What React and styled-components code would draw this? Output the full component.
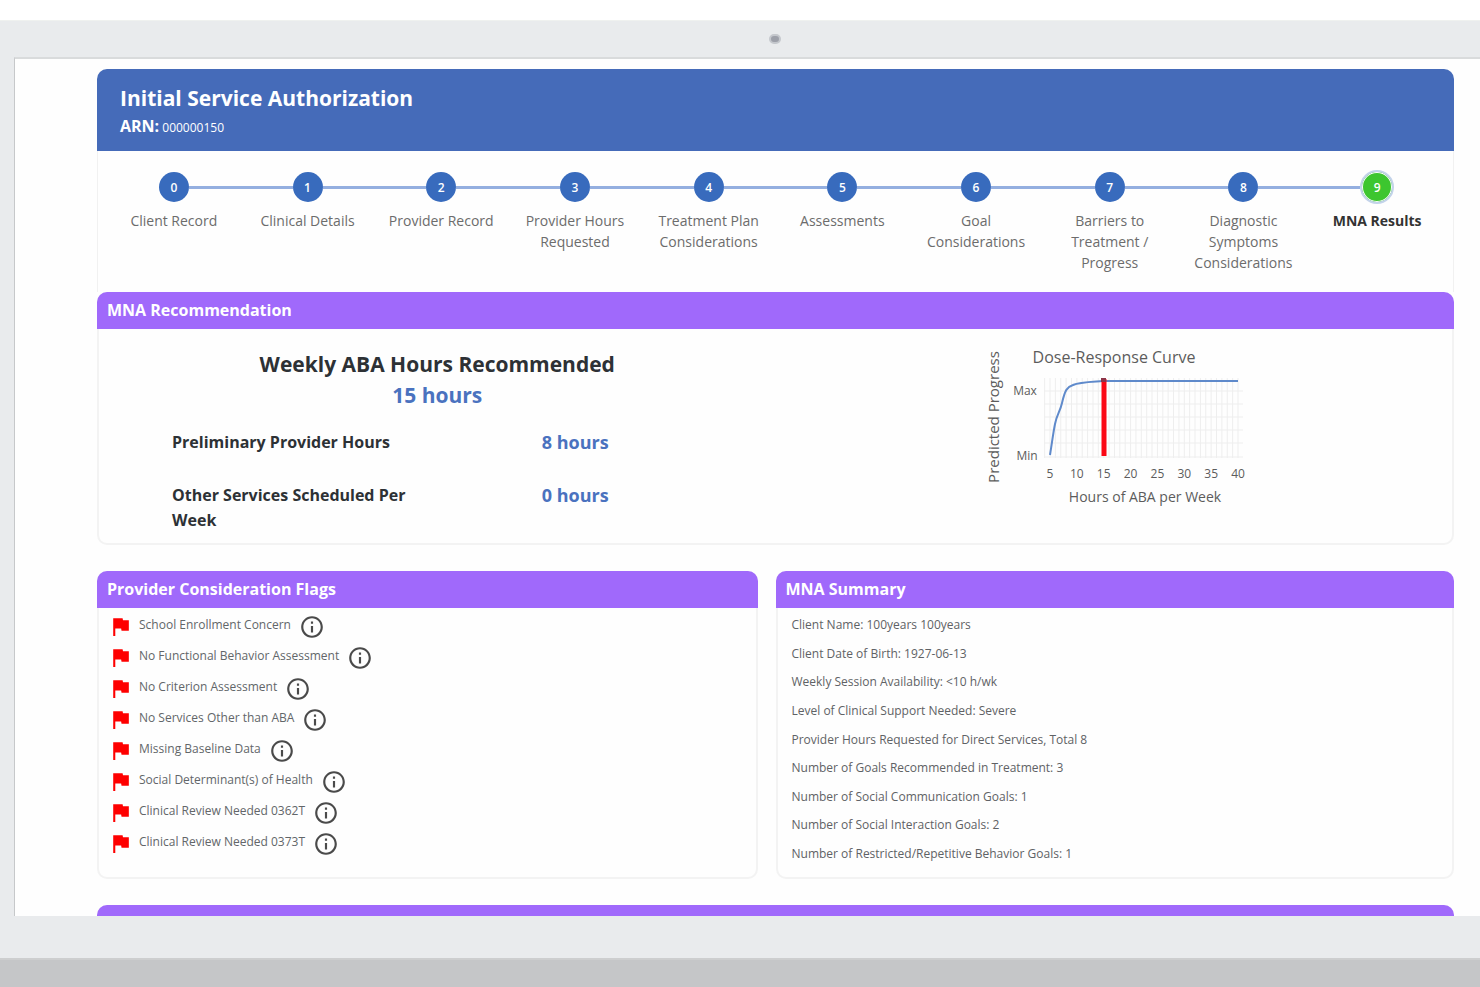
import { useState } from 'react';
import styled, { createGlobalStyle } from 'styled-components';
import { MdFlag, MdInfoOutline } from 'react-icons/md';

const GlobalStyle = createGlobalStyle`
    * {
        box-sizing: border-box;
    }
    body {
        margin: 0;
        background: #fff;
        color: #2d3135;
        font-family: 'Open Sans', 'Noto Sans', sans-serif;
    }
    h1, h2, h3, p, ul, ol {
        margin: 0;
        padding: 0;
    }
    ul, ol {
        list-style: none;
    }
    button {
        padding: 0;
        border: 0;
        background: none;
        color: inherit;
        font-family: inherit;
        cursor: pointer;
    }
`;

const Monitor = styled.div`
    display: flex;
    flex-direction: column;
    height: 100vh;
    padding-top: 20px;
`;

const Bezel = styled.div`
    flex: 1;
    min-height: 0;
    display: flex;
    flex-direction: column;
    padding: 0 0 42px 14px;
    background: #e9ebed;
    border-top: 1px solid #eff1ef;
`;

const CameraBar = styled.div`
    display: flex;
    flex: none;
    align-items: center;
    justify-content: center;
    height: 36px;
    padding-left: 56px;
`;

const Camera = styled.span`
    width: 12px;
    height: 10px;
    border: 2px solid #c5c8cd;
    border-radius: 5px;
    background: #9da0a9;
`;

const Base = styled.div`
    flex: none;
    height: 29px;
    background: #c5c6c8;
    border-top: 2px solid #cdcecf;
`;

const Screen = styled.main`
    flex: 1;
    min-height: 0;
    overflow: hidden;
    padding: 10px 26px 0 82px;
    border-top: 2px solid #d9dbdc;
    border-left: 1px solid #c6c8ca;
    background: #fefefe;
`;

const Header = styled.header`
    padding: 15px 23px 9px;
    border-radius: 10px 10px 0 0;
    background: #456bb9;
    color: #fff;
`;

const Title = styled.h1`
    font-size: 21px;
    line-height: 28px;
`;

const Arn = styled.p`
    font-size: 12px;
    line-height: 28px;

    strong {
        font-size: 16px;
    }
`;

const Steps = styled.ol`
    display: grid;
    grid-template-columns: repeat(10, 1fr);
    min-height: 141px;
    padding: 19px 9px 17px;
    border: solid #f1f1f1;
    border-width: 0 1px;
`;

const StepButton = styled.button`
    display: block;
    width: 100%;
    color: ${(p) => (p.$active ? '#333' : '#6c6c6c')};
    font-size: 14px;
    font-weight: ${(p) => (p.$active ? 700 : 400)};
    line-height: 21px;
`;

const Marker = styled.span`
    display: flex;
    align-items: center;
    height: 34px;
    margin-bottom: 6px;
`;

const Line = styled.span`
    flex: 1;
    height: 3px;
    background: ${(p) => (p.$hidden ? 'transparent' : '#94afe0')};
`;

const Circle = styled.span`
    display: flex;
    align-items: center;
    justify-content: center;
    width: ${(p) => (p.$active ? 34 : 30)}px;
    height: ${(p) => (p.$active ? 34 : 30)}px;
    border: ${(p) => (p.$active ? '2px solid #c3d3ea' : '0')};
    border-radius: 50%;
    background: ${(p) => (p.$active ? '#3dc62f' : '#386bbd')};
    box-shadow: ${(p) => (p.$active ? 'inset 0 0 0 1px #fff' : 'none')};
    color: #fff;
    font-size: 12px;
    font-weight: 600;
`;

const StepLabel = styled.span`
    display: block;
    padding: 0 10px;
`;

const Card = styled.section`
    display: flex;
    flex-direction: column;
    margin-bottom: 26px;
    border: 2px solid #f3f3f3;
    border-top: 0;
    border-radius: 10px;
`;

const CardTitle = styled.h2`
    margin: 0 -2px;
    padding: 6px 10px 7px;
    border-radius: 10px 10px 0 0;
    background: #a069fb;
    color: #fff;
    font-size: 16px;
    line-height: 24px;
`;

const Recommendation = styled.div`
    display: grid;
    grid-template-columns: 1fr 1fr;
    padding: 18px 0 10px;
`;

const Hours = styled.span`
    color: #4a72bf;
    font-size: ${(p) => (p.$large ? 21 : 18)}px;
    font-weight: 700;
    text-align: center;
`;

const Weekly = styled.div`
    display: flex;
    flex-direction: column;
    padding-top: 2px;
    margin-bottom: 19px;
    line-height: 31px;
    text-align: center;

    h3 {
        font-size: 21px;
    }
`;

const HoursRow = styled.div`
    display: grid;
    grid-template-columns: 13fr 12fr;
    padding: 0 73px;
    margin-bottom: ${(p) => (p.$last ? 0 : 28)}px;
    font-size: 16px;
    font-weight: 700;
    line-height: 25px;
`;

const ChartBox = styled.div`
    display: flex;
    justify-content: center;
    align-items: flex-start;
`;

const ChartText = styled.text`
    fill: #5c5c5c;
    font-family: 'Open Sans', 'Noto Sans', sans-serif;
    font-size: ${(p) => p.$size}px;
    text-anchor: middle;
`;

const Columns = styled.div`
    display: grid;
    grid-template-columns: 661fr 679fr;
    column-gap: 18px;
`;

const Flags = styled.ul`
    padding: 3px 9px 18px;
`;

const Flag = styled.li`
    display: flex;
    align-items: center;
    height: 31px;
    color: #626669;
    font-size: 12px;

    > svg {
        flex: none;
        margin-right: 6px;
        color: #fe0000;
    }
`;

const FlagText = styled.span`
    padding-bottom: 4px;
`;

const InfoButton = styled.button`
    display: flex;
    margin-left: 8px;
    color: #4a4a4a;
`;

const Summary = styled.ul`
    flex: 1;
    display: flex;
    flex-direction: column;
    justify-content: space-between;
    padding: 7px 14px 13px;
    color: #5f6265;
    font-size: 12px;
    line-height: 20px;
`;

const steps = [
    'Client Record',
    'Clinical Details',
    'Provider Record',
    'Provider Hours Requested',
    'Treatment Plan Considerations',
    'Assessments',
    'Goal Considerations',
    'Barriers to Treatment / Progress',
    'Diagnostic Symptoms Considerations',
    'MNA Results',
];

const flags = [
    'School Enrollment Concern',
    'No Functional Behavior Assessment',
    'No Criterion Assessment',
    'No Services Other than ABA',
    'Missing Baseline Data',
    'Social Determinant(s) of Health',
    'Clinical Review Needed 0362T',
    'Clinical Review Needed 0373T',
];

const summary = [
    'Client Name: 100years 100years',
    'Client Date of Birth: 1927-06-13',
    'Weekly Session Availability: <10 h/wk',
    'Level of Clinical Support Needed: Severe',
    'Provider Hours Requested for Direct Services, Total 8',
    'Number of Goals Recommended in Treatment: 3',
    'Number of Social Communication Goals: 1',
    'Number of Social Interaction Goals: 2',
    'Number of Restricted/Repetitive Behavior Goals: 1',
];

const hourX = (hour) => 67 + ((hour - 5) * 188) / 35;

const DoseChart = () => {
    const hours = Array.from({ length: 37 }, (_, i) => i + 4);
    const ticks = [5, 10, 15, 20, 25, 30, 35, 40];

    return (
        <svg width="262" height="166" role="img" aria-label="Dose-Response Curve">
            <g stroke="#eeeeee" strokeWidth="1">
                {hours.map((h) => (
                    <line key={h} x1={hourX(h)} x2={hourX(h)} y1="31" y2="111" />
                ))}
                {[44, 57, 70, 83, 96, 110].map((y) => (
                    <line key={y} x1="61" x2="260" y1={y} y2={y} />
                ))}
            </g>
            <path
                d="M67 108 C69 96 70 87 72 77 C74 67 77 65 79 56 C82 43 84 40 90 38 C96 35 104 35 120 34 H255"
                fill="none"
                stroke="#5f8acb"
                strokeWidth="2"
            />
            <line x1="121" x2="121" y1="32" y2="109" stroke="#fb0714" strokeWidth="5" />
            <rect x="118" y="31" width="5" height="4" fill="#8c3448" />
            <ChartText $size={16} x="131" y="16">
                Dose-Response Curve
            </ChartText>
            <ChartText $size={12} x="42" y="48">
                Max
            </ChartText>
            <ChartText $size={12} x="44" y="113">
                Min
            </ChartText>
            {ticks.map((t) => (
                <ChartText $size={12} key={t} x={hourX(t)} y="131">
                    {t}
                </ChartText>
            ))}
            <ChartText $size={14} x="162" y="155">
                Hours of ABA per Week
            </ChartText>
            <ChartText $size={15} transform="translate(16 70) rotate(-90)">
                Predicted Progress
            </ChartText>
        </svg>
    );
};

const App = () => {
    const [active, setActive] = useState(9);

    return (
        <Monitor>
            <GlobalStyle />
            <Bezel>
                <CameraBar>
                    <Camera />
                </CameraBar>
                <Screen>
                    <Header>
                        <Title>Initial Service Authorization</Title>
                        <Arn>
                            <strong>ARN:</strong> 000000150
                        </Arn>
                    </Header>
                    <Steps>
                        {steps.map((label, i) => (
                            <li key={label}>
                                <StepButton
                                    type="button"
                                    $active={i === active}
                                    onClick={() => setActive(i)}
                                >
                                    <Marker>
                                        <Line $hidden={i === 0} />
                                        <Circle $active={i === active}>{i}</Circle>
                                        <Line $hidden={i === steps.length - 1} />
                                    </Marker>
                                    <StepLabel>{label}</StepLabel>
                                </StepButton>
                            </li>
                        ))}
                    </Steps>
                    <Card>
                        <CardTitle>MNA Recommendation</CardTitle>
                        <Recommendation>
                            <div>
                                <Weekly>
                                    <h3>Weekly ABA Hours Recommended</h3>
                                    <Hours $large>15 hours</Hours>
                                </Weekly>
                                <HoursRow>
                                    <span>Preliminary Provider Hours</span>
                                    <Hours>8 hours</Hours>
                                </HoursRow>
                                <HoursRow $last>
                                    <span>Other Services Scheduled Per Week</span>
                                    <Hours>0 hours</Hours>
                                </HoursRow>
                            </div>
                            <ChartBox>
                                <DoseChart />
                            </ChartBox>
                        </Recommendation>
                    </Card>
                    <Columns>
                        <Card>
                            <CardTitle>Provider Consideration Flags</CardTitle>
                            <Flags>
                                {flags.map((text) => (
                                    <Flag key={text}>
                                        <MdFlag size={25} />
                                        <FlagText>{text}</FlagText>
                                        <InfoButton type="button" aria-label={`About ${text}`}>
                                            <MdInfoOutline size={26} />
                                        </InfoButton>
                                    </Flag>
                                ))}
                            </Flags>
                        </Card>
                        <Card>
                            <CardTitle>MNA Summary</CardTitle>
                            <Summary>
                                {summary.map((text) => (
                                    <li key={text}>{text}</li>
                                ))}
                            </Summary>
                        </Card>
                    </Columns>
                    <Card>
                        <CardTitle aria-hidden="true">&nbsp;</CardTitle>
                    </Card>
                </Screen>
            </Bezel>
            <Base />
        </Monitor>
    );
};

export default App;
